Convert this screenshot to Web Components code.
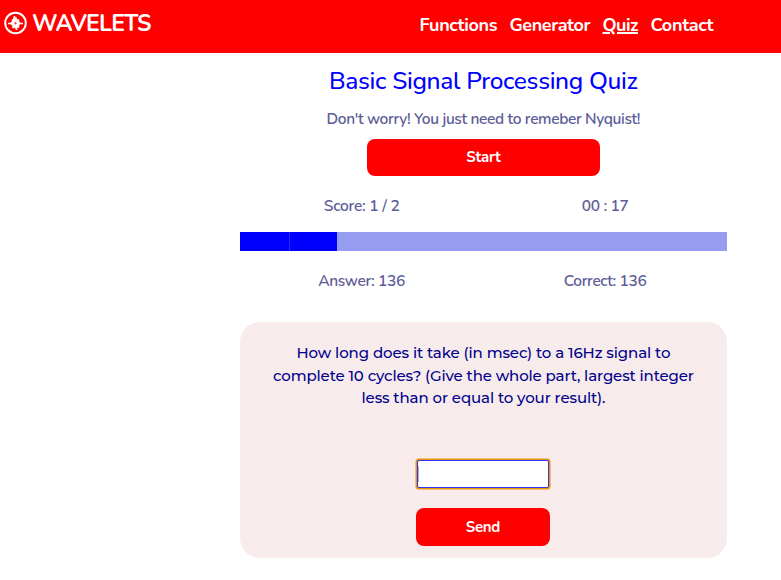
<!DOCTYPE html>
<html lang="en">
<head>
<meta charset="utf-8">
<title>Wavelets – Quiz</title>
<style>
html,body{margin:0;background:#fff}
body{font-family:Nunito,Lato,"Open Sans",sans-serif}
</style>
</head>
<body>
<quiz-page></quiz-page>
<script>
const define=(name,html,init)=>customElements.define(name,class extends HTMLElement{
  constructor(){
    super();
    const t=document.createElement('template');
    t.innerHTML=html;
    this.attachShadow({mode:'open'}).appendChild(t.content.cloneNode(true));
  }
  connectedCallback(){ if(init) init(this); }
});

/* A single line of text tracked to a given width. */
define('fit-text',`<style>
:host{display:inline-block;white-space:nowrap}
span{display:inline-block;text-decoration:var(--line,none);text-decoration-thickness:1.5px;text-underline-offset:1px;text-decoration-skip-ink:auto}
</style><span><slot></slot></span>`,el=>{
  const s=el.shadowRoot.querySelector('span');
  const w=+el.getAttribute('w');
  const n=el.textContent.length;
  const d=(w-s.getBoundingClientRect().width)/(n-1);
  s.style.letterSpacing=d+'px';
  s.style.marginRight=-d+'px';
});

define('brand-logo',`<style>
:host{display:flex;align-items:center;height:46px;color:#fff;font-size:23px;font-weight:700;line-height:48px}
fit-text{padding-top:1px}
svg{display:block;margin:0 5px 0 4px;flex:none}
::slotted(fit-text){padding-top:2px}
</style>
<svg width="23" height="24" viewBox="0 0 23 24" fill="none" stroke="#fff">
<circle cx="11.5" cy="12" r="10.3" stroke-width="2"/>
<path d="M4 12.500h15M10.500 5v3M12.500 16v3" stroke-width="1.600"/>
<path d="M9.500 6.500l1.500 1.500 1-2 1 2.500h2v2l1.500 2-1.500 1.500v2.500h-2l-1 1.500-1-1.500-2.500.5v-2.500L6 12.500l2-2V8.500h1.500z" fill="#fff" stroke-width=".6"/>
<path d="M11.500 11v2.500M10 12.200h3" stroke="#f44" stroke-width=".9"/>
</svg><slot></slot>`);

define('nav-link',`<style>
:host{display:block;color:#fff;font-size:18px;font-weight:700;line-height:24px}
:host([active]){--line:underline}
</style><slot></slot>`);

define('site-header',`<style>
:host{display:flex;justify-content:space-between;height:53px;background:#f00;box-sizing:border-box;padding-right:67.5px}
nav{display:flex;gap:12px;padding-top:13px}
</style>
<brand-logo><fit-text w="119.5">WAVELETS</fit-text></brand-logo>
<nav>
<nav-link><fit-text w="78">Functions</fit-text></nav-link>
<nav-link><fit-text w="81">Generator</fit-text></nav-link>
<nav-link active><fit-text w="36">Quiz</fit-text></nav-link>
<nav-link><fit-text w="63">Contact</fit-text></nav-link>
</nav>`);

define('action-button',`<style>
:host{display:block}
button{display:block;width:100%;height:37.500px;padding:0;border:0;border-radius:8px;background:#f00;color:#fff;font:700 15px/var(--label-line,38px) Nunito,Lato,sans-serif}
</style><button><slot></slot></button>`);

define('stat-row',`<style>
:host{display:grid;grid-template-columns:1fr 1fr;justify-items:center;color:#5d5d99;font-size:15.5px;font-weight:600;line-height:24px}
</style><slot></slot>`);

define('progress-bar',`<style>
:host{display:grid;grid-template-columns:repeat(10,1fr);height:19px;background:#969cf0}
i{background:#00f}
i+i{box-shadow:inset 1px 0 #2a2af8}
</style><i></i><i></i>`);

define('question-card',`<style>
:host{display:flex;flex-direction:column;align-items:center;box-sizing:border-box;height:236px;padding-top:20px;border-radius:20px;background:#f7ebeb}
div{display:flex;flex-direction:column;align-items:center;font:500 15px/22.5px Montserrat,Inter,sans-serif;color:#00008b}
input{display:block;flex:none;box-sizing:border-box;width:132px;height:28px;margin:50.500px 1px 20px 0;padding:0 1px;border:1px solid #33f;border-radius:2px;background:linear-gradient(#aaf,#aaf) 0 50%/1px 16px no-repeat #fff;outline:0;box-shadow:0 0 0 1.500px #e59700}
action-button{width:134px;margin-right:1px}
</style>
<div><slot></slot></div>
<input type="text" aria-label="Answer">
<action-button><fit-text w="34.5">Send</fit-text></action-button>`);

define('quiz-page',`<style>
:host{display:block;height:580px;background:#fff}
main{width:487px;margin-left:240px;display:flex;flex-direction:column}
h1{margin:11px 0 0;font-size:24.5px;font-weight:500;line-height:34px;color:#00f;text-align:center}
p{margin:9px 0 0;font-size:15.5px;font-weight:600;line-height:24px;height:24px;color:#5d5d99;text-align:center}
.start{width:233px;margin:7.500px auto 0;--label-line:37px}
.a{margin-top:18px}
progress-bar{margin-top:14px}
.b{margin-top:18px}
question-card{margin-top:29px}
</style>
<site-header></site-header>
<main>
<h1><fit-text w="309">Basic Signal Processing Quiz</fit-text></h1>
<p><fit-text w="314">Don't worry! You just need to remeber Nyquist!</fit-text></p>
<action-button class="start"><fit-text w="34.5">Start</fit-text></action-button>
<stat-row class="a"><fit-text w="76">Score: 1 / 2</fit-text><fit-text w="47">00 : 17</fit-text></stat-row>
<progress-bar></progress-bar>
<stat-row class="b"><fit-text w="87">Answer: 136</fit-text><fit-text w="83">Correct: 136</fit-text></stat-row>
<question-card><fit-text w="374">How long does it take (in msec) to a 16Hz signal to</fit-text><fit-text w="421">complete 10 cycles? (Give the whole part, largest integer</fit-text><fit-text w="244">less than or equal to your result).</fit-text></question-card>
</main>`);
</script>
</body>
</html>
